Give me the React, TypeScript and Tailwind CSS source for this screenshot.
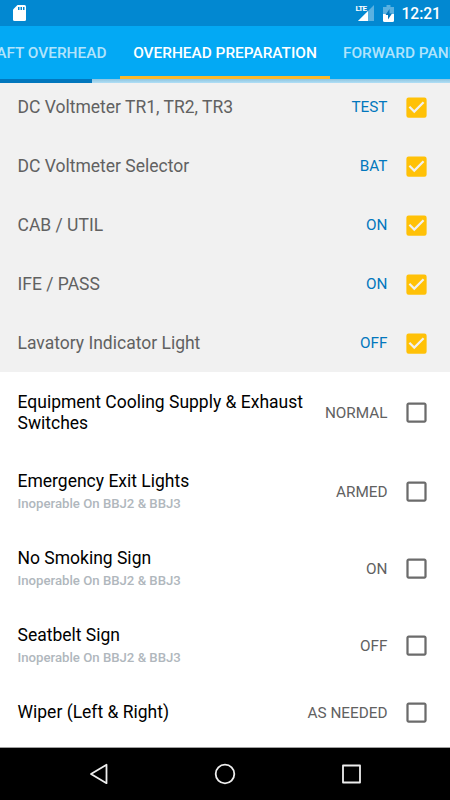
import React from "react";
import { MdCheckBox, MdCheckBoxOutlineBlank } from "react-icons/md";

type ChecklistItem = {
  title: string;
  note?: string;
  value: string;
  checked?: boolean;
  height: string;
};

const items: ChecklistItem[] = [
  { title: "DC Voltmeter TR1, TR2, TR3", value: "TEST", checked: true, height: "h-[59px]" },
  { title: "DC Voltmeter Selector", value: "BAT", checked: true, height: "h-[59px]" },
  { title: "CAB / UTIL", value: "ON", checked: true, height: "h-[59px]" },
  { title: "IFE / PASS", value: "ON", checked: true, height: "h-[59px]" },
  { title: "Lavatory Indicator Light", value: "OFF", checked: true, height: "h-[59px]" },
  { title: "Equipment Cooling Supply & Exhaust Switches", value: "NORMAL", height: "h-[81px]" },
  { title: "Emergency Exit Lights", note: "Inoperable On BBJ2 & BBJ3", value: "ARMED", height: "h-[77px]" },
  { title: "No Smoking Sign", note: "Inoperable On BBJ2 & BBJ3", value: "ON", height: "h-[77px]" },
  { title: "Seatbelt Sign", note: "Inoperable On BBJ2 & BBJ3", value: "OFF", height: "h-[77px]" },
  { title: "Wiper (Left & Right)", value: "AS NEEDED", height: "h-[57px]" },
];

const StatusBar: React.FC = () => (
  <div className="flex h-[26px] items-center bg-[#0288d1] pl-[13px] pr-[9px] text-white">
    <svg width="13" height="16" viewBox="0 0 13 16">
      <path d="M4.5 0H11.5Q13 0 13 1.5V14.5Q13 16 11.5 16H1.5Q0 16 0 14.5V4.5Z" fill="#fff" />
      <path d="M5 2h1.5v3H5zM7.5 2H9v3H7.5zM10 2h1.5v3H10z" fill="#0288d1" />
    </svg>
    <div className="ml-auto flex items-center">
      <svg width="20" height="18" viewBox="0 0 20 18">
        <path d="M19 1V17H3Z" fill="#fff" fillOpacity="0.35" />
        <path d="M13 7V17H3Z" fill="#fff" />
        <path d="M0 0H11V9H0Z" fill="#0288d1" />
      </svg>
      <span className="-ml-[20px] w-[20px] -mt-[9px] text-[8px] leading-none font-bold tracking-[-0.6px]">LTE</span>
      <svg className="ml-[8px]" width="11" height="17" viewBox="0 0 11 17">
        <path d="M3.5 0H7.5V2H11V9H0V2H3.5Z" fill="#fff" fillOpacity="0.35" />
        <path d="M0 9H11V15.5Q11 17 9.5 17H1.5Q0 17 0 15.5Z" fill="#fff" />
        <path d="M6.5 4L2.5 10H5V14.5L9 8.5H6.5Z" fill="#0277bd" />
      </svg>
      <span className="ml-[7px] pt-[3px] text-[15.6px] leading-none font-medium">12:21</span>
    </div>
  </div>
);

const Tabs: React.FC = () => (
  <div className="flex h-[53px] bg-[#03a9f4] text-[15.4px] font-medium whitespace-nowrap">
    <div className="flex w-[120px] shrink-0 items-center justify-end pt-[2px] pr-[13.5px] text-white/70">AFT OVERHEAD</div>
    <div className="flex w-[210px] shrink-0 items-center justify-center border-b-[3px] border-[#fbb829] pt-[5px] text-white">
      OVERHEAD PREPARATION
    </div>
    <div className="flex w-[120px] shrink-0 items-center pt-[2px] pl-[13px] text-white/70">FORWARD PANEL</div>
  </div>
);

const Row: React.FC<{ item: ChecklistItem }> = ({ item }) => (
  <div className={`flex items-center pl-[17.5px] pr-[20.5px] ${item.height} ${item.checked ? "bg-[#f1f1f1] pt-[2px]" : "bg-white"}`}>
    <div className="w-[295px]">
      <div className={`text-[17.5px] leading-[21px] ${item.checked ? "text-[#616161]" : "text-black"}`}>{item.title}</div>
      {item.note && <div className="mt-[4px] mb-[1px] text-[13.2px] leading-[16px] font-medium text-[#b0b7bd]">{item.note}</div>}
    </div>
    <div className={`ml-auto shrink-0 text-[15.3px] whitespace-nowrap ${item.checked ? "text-[#0277bd]" : "pt-[1px] text-[#616161]"}`}>
      {item.value}
    </div>
    {item.checked ? (
      <MdCheckBox className="ml-[15px] size-[27px] shrink-0 text-[#ffc107]" />
    ) : (
      <MdCheckBoxOutlineBlank className="ml-[15px] size-[27px] shrink-0 text-[#6b6b6b]" />
    )}
  </div>
);

const App: React.FC = () => {
  return (
    <div className="flex h-[800px] w-[450px] flex-col overflow-hidden bg-white font-['Roboto',sans-serif]">
      <header className="z-10 shrink-0">
        <StatusBar />
        <Tabs />
        <div className="h-[4px] bg-linear-to-b from-[#8fc4df] to-[#b0dff6]">
          <div className="h-full w-[92px] bg-[#0277bd]"></div>
        </div>
      </header>

      {/* the list is scrolled a little, its first row slides under the header */}
      <main className="-mt-[6px] min-h-0 flex-1 overflow-hidden">
        {items.map((item) => (
          <Row key={item.title} item={item} />
        ))}
      </main>

      <nav className="flex h-[53px] shrink-0 items-center justify-between border-t border-[#a0a0a0] bg-black px-[88px]">
        <svg width="22" height="22" viewBox="0 0 22 22" fill="none" stroke="#eee" strokeWidth="1.8" strokeLinejoin="round">
          <path d="M18.5 1.8V20.2L3 11Z" />
        </svg>
        <svg width="22" height="22" viewBox="0 0 22 22" fill="none" stroke="#eee" strokeWidth="1.8">
          <circle cx="11" cy="11" r="9.3" />
        </svg>
        <svg width="22" height="22" viewBox="0 0 22 22" fill="none" stroke="#eee" strokeWidth="1.8" strokeLinejoin="round">
          <path d="M3 2.5H20V19.5H3Z" />
        </svg>
      </nav>
    </div>
  );
};

export default App;
